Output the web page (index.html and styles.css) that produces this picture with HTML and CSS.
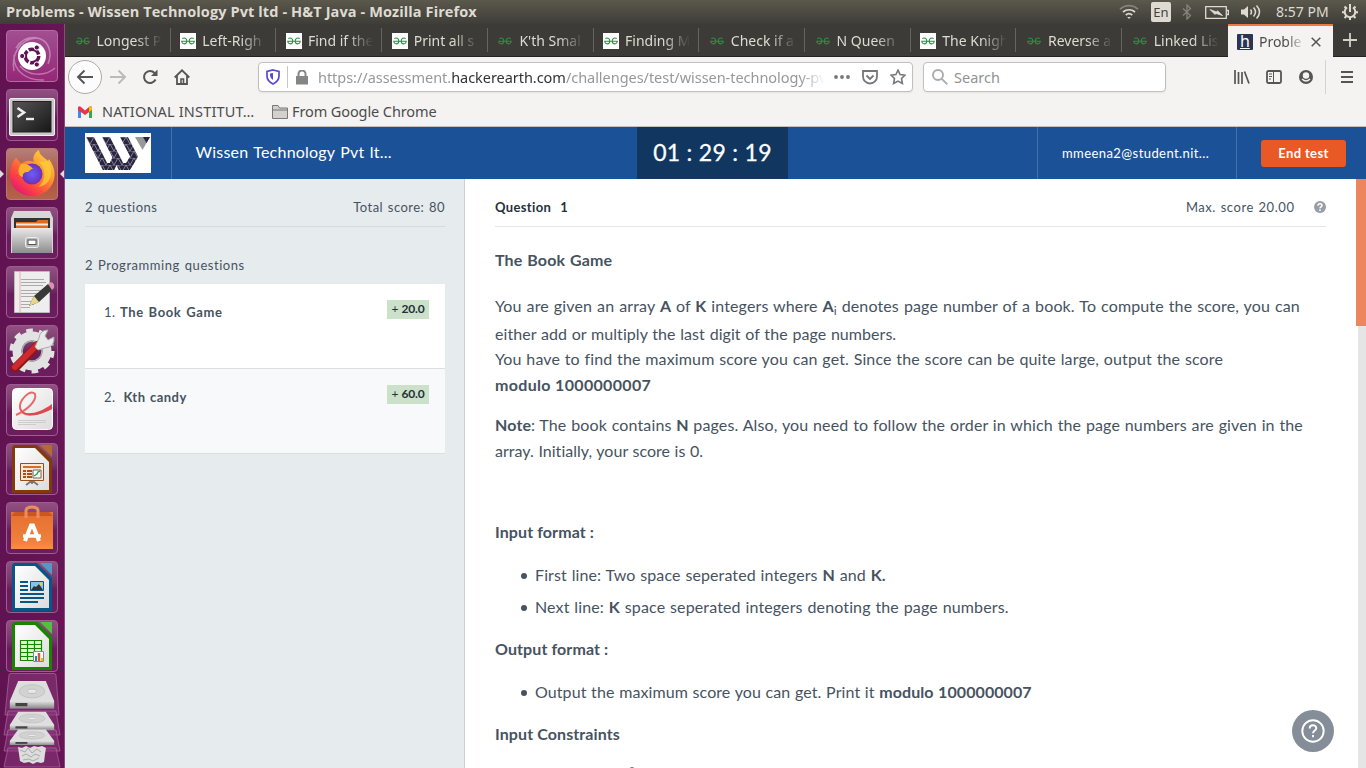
FILE: index.html
```html
<!DOCTYPE html>
<html lang="en">
<head>
<meta charset="utf-8">
<title>Problems - Wissen Technology Pvt ltd - H&amp;T Java</title>
<link rel="stylesheet" href="styles.css">
</head>
<body>
<svg class="defs" width="0" height="0">
  <defs>
    <linearGradient id="paper" x1="0" y1="0" x2="1" y2="1"><stop offset="0" stop-color="#fff"/><stop offset="1" stop-color="#dcdcdc"/></linearGradient>
    <linearGradient id="steel" x1="0" y1="0" x2="0" y2="1"><stop offset="0" stop-color="#e8e8e8"/><stop offset="1" stop-color="#8d8d8d"/></linearGradient>
    <linearGradient id="screen" x1="0" y1="0" x2="1" y2="1"><stop offset="0" stop-color="#555"/><stop offset="1" stop-color="#171717"/></linearGradient>
    <linearGradient id="fire" x1="1" y1="0" x2="0.2" y2="1"><stop offset="0" stop-color="#ffe84d"/><stop offset="0.4" stop-color="#ff9a2c"/><stop offset="0.75" stop-color="#ff4242"/><stop offset="1" stop-color="#e0127c"/></linearGradient>
    <radialGradient id="globe"><stop offset="0" stop-color="#6a5cff"/><stop offset="1" stop-color="#6b32b5"/></radialGradient>
    <linearGradient id="bag" x1="0" y1="0" x2="0" y2="1"><stop offset="0" stop-color="#e5702f"/><stop offset="0.8" stop-color="#f0803c"/><stop offset="1" stop-color="#f98e4c"/></linearGradient>
    <pattern id="tri" width="8" height="7" patternUnits="userSpaceOnUse" patternTransform="translate(1 4)"><path d="M0 0H8V7H0Z" fill="#292541"/><path d="M0 0H8M0 0 4 7 8 0" fill="none" stroke="#a9a6b5" stroke-width=".7"/></pattern>
    <clipPath id="band"><path d="M0 4H66V37H0Z"/></clipPath>
    <symbol id="gfg" viewBox="0 0 16 16"><g fill="none" stroke="currentColor" stroke-width="1.100"><path d="M1.200 8.200H14.800M2.300 5.500C4 4.600 6.800 5 6.800 8c0 3.800-5 3.800-5 .2M13.700 5.500C12 4.600 9.200 5 9.200 8c0 3.800 5 3.800 5 .2"/></g></symbol>
    <symbol id="disk" viewBox="0 0 50 32" preserveAspectRatio="none"><path d="M10 1H40L49 22V30H1V22Z" fill="#dedede"/><path d="M1 22H49V30H1Z" fill="url(#steel)"/><path d="M7 24.500H20V28H7Z" fill="#444"/><ellipse cx="25" cy="12" rx="14" ry="7" fill="#d2d2d2" stroke="#c1c1c1"/><ellipse cx="25" cy="12" rx="5" ry="2.300" fill="#e9e9e9" stroke="#bbb"/></symbol>
  </defs>
</svg>
<div class="panel">
  <div class="panel-title">Problems - Wissen Technology Pvt ltd - H&amp;T Java - Mozilla Firefox</div>
  <div class="tray">
    <svg width="20" height="16" viewBox="0 0 20 16" fill="none" stroke="#dfdbd2" stroke-width="1.700"><path d="M1 5.200C6 .4 14 .4 19 5.200" stroke="#87847b"/><path d="M4 8c3.500-3 8.500-3 12 0M6.800 11c2-1.700 4.400-1.700 6.400 0"/><path d="M8.200 13h3.600L10 15Z" fill="#dfdbd2" stroke="none"/></svg>
    <span class="lang">En</span>
    <svg class="bt" width="10" height="16" viewBox="0 0 10 16" fill="none" stroke="#87847b" stroke-width="1.300"><path d="M1 4.500 8.500 11.500 5 15V1L8.500 4.500 1 11.500"/></svg>
    <svg class="bat" width="24" height="13" viewBox="0 0 24 13"><path d="M.7.7H21.300V12.300H.7ZM22 4.500h1.400v4H22" fill="none" stroke="#dfdbd2" stroke-width="1.300"/><path d="M5 3.500 11.500 6 12.500 4.800 17.500 9.500 11 7.500 10 8.500Z" fill="#dfdbd2" stroke="#dfdbd2" stroke-width=".8"/></svg>
    <svg class="vol" width="21" height="16" viewBox="0 0 21 16"><path d="M1 5.500H4L8 2V14L4 10.500H1Z" fill="#dfdbd2"/><path d="M10.500 5.500q2 2.500 0 5M13.500 3.500q4 4.500 0 9M16.500 1.500q6 6.500 0 13" fill="none" stroke="#dfdbd2" stroke-width="1.500"/></svg>
    <span class="clock">8:57 PM</span>
    <svg width="16" height="16" viewBox="0 0 16 16" fill="none" stroke="#dfdbd2"><path d="M5 3.500A5.300 5.300 0 1 0 11 3.500" stroke-width="2"/><path d="M8 0V8" stroke-width="2"/><path d="M2.500 2.500 4.500 4.500M13.500 2.500l-2 2M0 8.200H3M13 8.200H16M2.500 14l2-2M13.500 14l-2-2M8 13v3" stroke-width="2"/></svg>
  </div>
</div>
<div class="desktop">
  <nav class="dock">
    <div class="tile dash"><svg viewBox="0 0 52 52"><g fill="none" stroke="#fff" opacity=".35" stroke-width="1.500"><path d="M8 41C5 24 14 9 30 8c12 1 17 14 12 26M10 18C18 4 38 4 43 18M38 50C22 51 7 42 8 25M49 38C39 47 22 46 14 36"/></g><circle cx="26" cy="26" r="14" fill="#fff"/><circle cx="26" cy="26" r="6.800" fill="none" stroke="#5d1653" stroke-width="3.500" stroke-dasharray="12.500 1.700"/><g fill="#5d1653" stroke="#fff"><circle cx="16.200" cy="26" r="2.600"/><circle cx="30.800" cy="17.500" r="2.600"/><circle cx="30.800" cy="34.500" r="2.600"/></g></svg></div>
    <div class="tile"><svg viewBox="0 0 52 52"><rect x="3.500" y="9.500" width="45" height="37" rx="1.500" fill="#c9c9c9" stroke="#eee"/><rect x="7" y="12.500" width="38" height="30.500" fill="url(#screen)" stroke="#222"/><path d="M11.500 19 18 23.500 11.500 28" fill="none" stroke="#eee" stroke-width="2.600"/><path d="M20 30h8" stroke="#eee" stroke-width="2.400"/></svg></div>
    <div class="tile fox"><svg viewBox="0 0 52 52"><path d="M5 20C6 14 8 12 10 9.500L15 16C20 11 26 13 28 14 26 9 29 4 33 2c0 5 6 8 9 11l1-2c4 6 6 11 5.500 17C48 39 38 48 26 48S4 39 4 28c0-3 0-5 1-8Z" fill="url(#fire)"/><circle cx="26" cy="26" r="10.500" fill="url(#globe)"/><path d="M15 16c5-1 9 1 12 5-3 0-3 2-5 3-3 0-6 1-5 5-5-1-6-7-2-13Z" fill="#ffb02d"/><path d="M32 14c8 4 9 19 0 25 14-2 16-16 10-26" fill="#ffce3a" opacity=".75"/></svg><i class="pip left"></i><i class="pip right"></i></div>
    <div class="tile"><svg viewBox="0 0 52 52"><path d="M8 4H44L47 11V46H5V11Z" fill="#d7d7d7"/><path d="M8 11H44V24H8Z" fill="#333"/><path d="M10 15H30l2-2H42V24H10Z" fill="#df6b20"/><path d="M10 16.500H42V18.500H10Z" fill="#f3eadc"/><path d="M6 21H46V46H6Z" fill="url(#steel)"/><rect x="19.500" y="30.500" width="13" height="10" rx="2" fill="#bcbcbc" stroke="#eee"/><rect x="22" y="33" width="8" height="4.500" fill="#fff" stroke="#555"/></svg></div>
    <div class="tile"><svg viewBox="0 0 52 52"><path d="M8.500 5.500H43.500V46.500H8.500Z" fill="#eee" stroke="#bbb"/><path d="M14 6V46" stroke="#eaa"/><path d="M15 13.500H38M15 16.500H40M15 19.500H37M15 24.500H40M15 27.500H34M15 30.500H39M15 35.500H31M15 38.500H28M15 41.500H24" stroke="#aaa"/><path d="M23 40 28 30 42 18 47 23 33 36Z" fill="#383838"/><path d="M23 40 28 30 33 36Z" fill="#e6d88b"/><path d="M42 18 45 16q4 1 3 6l-2 2Z" fill="#df8fb3"/></svg></div>
    <div class="tile"><svg viewBox="0 0 52 52"><circle cx="26" cy="26" r="15" fill="none" stroke="#e2e2e2" stroke-width="9"/><circle cx="26" cy="26" r="20" fill="none" stroke="#e2e2e2" stroke-width="5" stroke-dasharray="6.500 6.070"/><circle cx="26" cy="26" r="10" fill="none" stroke="#aaa" stroke-width="1.500"/><path d="M9 43 32 20" stroke="#8f1518" stroke-width="8.500" stroke-linecap="round"/><path d="M9 42 31 20" stroke="#ce2a2d" stroke-width="6" stroke-linecap="round"/><path d="M29 22 33 13q1-8 9-8l-3 6 3 4 6-3q1 10-9 11L32 25Z" fill="#e8e8e8" stroke="#aaa"/></svg></div>
    <div class="tile"><svg viewBox="0 0 52 52"><rect x="6.500" y="4.500" width="40" height="41" rx="4" fill="url(#paper)" stroke="#fff"/><path d="M10 31C21 26 31 17 29 10 24 5 13 16 14 24c2 9 16 9 32-1" fill="none" stroke="#e66b6d" stroke-width="2"/><path d="M14 24c3 8 17 7 32-4v5C30 34 15 33 14 24Z" fill="#dc4a4d"/><path d="M12 36.500H40M12 38.500H40M12 40.500H30" stroke="#ccc"/></svg></div>
    <div class="tile"><svg viewBox="0 0 52 52"><path d="M8 2H31L46 17V50H6V4Z" fill="#813b0b"/><path d="M34 2H46V14Z" fill="#b56a30"/><path d="M9 5H29L43 19V47H9Z" fill="url(#paper)"/><path d="M14.500 20.500H37.500V37.500H14.500Z" fill="#fbe8d8" stroke="#9c4b16"/><path d="M17 24H35" stroke="#d46e2c" stroke-width="2"/><path d="M17 28h3m1 0h5M17 31h3m1 0h5M17 34h3m1 0h5" stroke="#ad5017" stroke-width="2"/><path d="M27 27H35V35H27Z" fill="#fff" stroke="#666"/><path d="m28 33 3-2 1-2 2-1" fill="none" stroke="#35a53a" stroke-width="1.500"/><path d="M26 38v3m-6 1 4-3h4l4 3" fill="none" stroke="#777" stroke-width="1.800"/></svg></div>
    <div class="tile"><svg viewBox="0 0 52 52"><path d="M5 10H47V47H5Z" fill="url(#bag)"/><path d="M5 14 9 10H43L47 14Z" fill="#ca5721"/><path d="M20 16V9q0-4 6-4t6 4v7" fill="none" stroke="#ed8c5c" stroke-width="3"/><path d="M19 39 25 23.500H27L33 39" fill="none" stroke="#fff" stroke-width="4"/><path d="M17 34H35" stroke="#fff" stroke-width="3.500"/></svg></div>
    <div class="tile"><svg viewBox="0 0 52 52"><path d="M8 2H31L46 17V50H6V4Z" fill="#075686"/><path d="M34 2H46V14Z" fill="#4c9bc8"/><path d="M9 5H29L43 19V47H9Z" fill="url(#paper)"/><path d="M14 21h8m-8 4h8m-8 4h8M14 33H38M14 37H38M14 41H32" stroke="#075686" stroke-width="2"/><path d="M24.500 20.500H37.500V29.500H24.500Z" fill="#80c5ea" stroke="#075686"/><path d="m25 29 3-4 2 1 3-3 4 6Z" fill="#333"/><circle cx="35" cy="23" r="1.500" fill="#f3d034"/></svg></div>
    <div class="tile"><svg viewBox="0 0 52 52"><path d="M8 2H31L46 17V50H6V4Z" fill="#188500"/><path d="M34 2H46V14Z" fill="#54c13d"/><path d="M9 5H29L43 19V47H9Z" fill="url(#paper)"/><path d="M14.500 20.500H35.500V40.500H14.500ZM14 24.500H36M14 28.500H36M14 32.500H36M14 36.500H36M21.500 20V41M28.500 20V41" fill="#d9f6cd" stroke="#188500" stroke-width="1.200"/><path d="M27.500 31.500H37.500V41.500H27.500Z" fill="#fff" stroke="#888"/><path d="M30 41v-5" stroke="#1988c7" stroke-width="2"/><path d="M33 41V33" stroke="#d76020" stroke-width="2.500"/><path d="M36 41v-3" stroke="#e8b72c" stroke-width="2"/></svg></div>
    <svg class="stack" viewBox="0 0 60 96"><g fill="#8d3b80" fill-opacity=".5" stroke="#aa6b9e" stroke-opacity=".7"><path d="M7 2Q7 .5 9 .5H52q2 0 2 2L57 42H3Z"/><path d="M6 38H54L58 62H2Z"/><path d="M6 57H54L58 78H2Z"/><path d="M6 75H54L58 94H2Z"/></g><use href="#disk" x="7" y="7" width="46" height="30"/><use href="#disk" x="7" y="38" width="46" height="20"/><use href="#disk" x="7" y="56" width="46" height="17"/><path d="m16 74 4 1 4-2 4 2 4-2 4 1 4-1 4 2-1 6-1 8-3 1-4-1-4 2-4-2-5 1-4-2-1-7Z" fill="#ddd"/><path d="m18 77 5 2 3-4 4 5 5-4 4 3M20 83l4-2 5 3 4-3 5 2M21 87l6-1 4 2 6-3" fill="none" stroke="#aaa"/></svg>
  </nav>
  <main class="window">
    <div class="tabs">
      <div class="tab"><svg class="fav"><use href="#gfg"/></svg><span>Longest P</span></div>
      <div class="tab"><svg class="fav white"><use href="#gfg"/></svg><span>Left-Righ</span></div>
      <div class="tab"><svg class="fav white"><use href="#gfg"/></svg><span>Find if the</span></div>
      <div class="tab"><svg class="fav white"><use href="#gfg"/></svg><span>Print all s</span></div>
      <div class="tab"><svg class="fav"><use href="#gfg"/></svg><span>K'th Smal</span></div>
      <div class="tab"><svg class="fav white"><use href="#gfg"/></svg><span>Finding M</span></div>
      <div class="tab"><svg class="fav"><use href="#gfg"/></svg><span>Check if a</span></div>
      <div class="tab"><svg class="fav"><use href="#gfg"/></svg><span>N Queen</span></div>
      <div class="tab"><svg class="fav white"><use href="#gfg"/></svg><span>The Knigh</span></div>
      <div class="tab"><svg class="fav"><use href="#gfg"/></svg><span>Reverse a</span></div>
      <div class="tab last"><svg class="fav"><use href="#gfg"/></svg><span>Linked Lis</span></div>
      <div class="tab active"><b class="he">h</b><span>Proble</span><svg class="close" viewBox="0 0 10 10"><path d="m.7.7 8.600 8.600M9.300.7.7 9.300" stroke="#555" stroke-width="1.500"/></svg></div>
      <div class="plus"><svg width="14" height="14" viewBox="0 0 14 14"><path d="M7 0V14M0 7H14" stroke="#d5d2ca" stroke-width="1.800"/></svg></div>
    </div>
    <div class="nav">
      <div class="back"><svg width="18" height="16" viewBox="0 0 18 16" fill="none" stroke="#555" stroke-width="1.900"><path d="M17 8H2M8.500 1.500 2 8l6.500 6.500"/></svg></div>
      <svg class="fwd" width="18" height="16" viewBox="0 0 18 16" fill="none" stroke="#bababa" stroke-width="1.900"><path d="M1 8H16M9.500 1.500 16 8l-6.500 6.500"/></svg>
      <svg class="reload" width="16" height="16" viewBox="0 0 16 16"><path d="M13.500 10.500A6 6 0 1 1 12.500 4" fill="none" stroke="#555" stroke-width="2"/><path d="M15.500.5V7H9Z" fill="#555"/></svg>
      <svg class="home" width="16" height="16" viewBox="0 0 16 16" fill="none" stroke="#555" stroke-width="1.800"><path d="M.7 8.500 8 1.300 15.300 8.500M3 7v8H13V7"/><path d="M7 15V10H9.500V15" stroke-width="1.600"/></svg>
      <div class="url">
        <svg width="14" height="16" viewBox="0 0 14 16"><path d="M7 1 13 2.500V7q0 5-6 8Q1 12 1 7V2.500Z" fill="#fff" stroke="#5848d4" stroke-width="1.700"/><path d="M7 4v7q-3-2-3-4.500V4.500Z" fill="#5848d4"/></svg>
        <i class="bar"></i>
        <svg class="lock" width="12" height="15" viewBox="0 0 12 15"><path d="M0 6H12V14.500H0Z" fill="#858585"/><path d="M2.500 7V4a3.500 3.500 0 0 1 7 0V7" fill="none" stroke="#858585" stroke-width="2"/></svg>
        <span class="addr">https://assessment.<b>hackerearth.com</b>/challenges/test/wissen-technology-pv</span>
        <svg width="16" height="4" viewBox="0 0 16 4" fill="#777"><circle cx="2" cy="2" r="1.900"/><circle cx="8" cy="2" r="1.900"/><circle cx="14" cy="2" r="1.900"/></svg>
        <svg class="pocket" width="16" height="15" viewBox="0 0 16 15" fill="none" stroke="#777" stroke-width="1.800"><path d="M1 1H15V6.500a7 7 0 0 1-14 0Z"/><path d="m4.500 5.500 3.500 3.500 3.500-3.500"/></svg>
        <svg width="16" height="16" viewBox="0 0 16 16" fill="none" stroke="#777" stroke-width="1.600"><path d="M8 1.200 10.100 5.500 15 6.100 11.500 9.500 12.400 14.500 8 12.100 3.600 14.500 4.500 9.500 1 6.100 5.900 5.500Z"/></svg>
      </div>
      <div class="search"><svg width="16" height="16" viewBox="0 0 16 16" fill="none" stroke="#aaa" stroke-width="1.900"><circle cx="6" cy="6" r="5"/><path d="m9.800 9.800 5.500 5.500"/></svg><span>Search</span></div>
      <div class="tools">
        <svg width="16" height="14" viewBox="0 0 16 14" stroke="#555" stroke-width="1.700"><path d="M1 0V14M4.500 2V14M8 2V14M10.500 1.500 15 13.500"/></svg>
        <svg width="16" height="14" viewBox="0 0 16 14" fill="none" stroke="#555"><rect x="1" y="1" width="14" height="12" rx="1.500" stroke-width="1.800"/><path d="M7.500 1V13M3 4H6M3 6.500H6M3 9H5"/></svg>
        <svg width="14" height="14" viewBox="0 0 14 14"><circle cx="7" cy="7" r="7" fill="#555"/><circle cx="7" cy="5.500" r="3.200" fill="#f4f3f2"/><path d="M3 9q4 4 8 0" fill="none" stroke="#f4f3f2" stroke-width="1.300"/></svg>
      </div>
      <div class="menu"><svg width="12" height="12" viewBox="0 0 12 12" stroke="#555" stroke-width="1.900"><path d="M0 1H12M0 6H12M0 11H12"/></svg></div>
    </div>
    <div class="bookmarks">
      <svg width="16" height="12" viewBox="0 0 16 12"><path d="M1 1H4V12H1Z" fill="#4285f4"/><path d="M12 1H15V12H12Z" fill="#34a853"/><path d="M1 1.500Q2-.5 4 1L8 4.500 12 1q2-1.500 3 .5V4L8 9 1 4Z" fill="#ea334b"/><path d="M12 1q3-2 3 1V4L12 6Z" fill="#fbbc04"/></svg>
      <span class="bm1">NATIONAL INSTITUT…</span>
      <svg class="folder" width="16" height="14" viewBox="0 0 16 14"><path d="M.5 13.500V.5H6L7.500 3H15.500V13.500ZM.5 5H15.500" fill="#d3d1ce" stroke="#777"/></svg>
      <span class="bm2">From Google Chrome</span>
    </div>
    <header class="site">
      <div class="brand"><svg width="66" height="40" viewBox="0 0 66 40"><path d="M0 0H66V40H0Z" fill="#fff"/><g clip-path="url(#band)" fill="none" stroke="url(#tri)" stroke-width="7"><path d="M3 0 20 33.500H27L31 25"/><path d="M19 0 36 33.500H43L49 23.500 37 0"/></g><path d="M50 4H65L57.500 17Z" fill="#999"/><path d="M58 4H65L61.500 10Z" fill="#292541"/></svg></div>
      <div class="company">Wissen Technology Pvt lt...</div>
      <div class="timer">01 : 29 : 19</div>
      <div class="user">mmeena2@student.nit...</div>
      <div class="end"><button>End test</button></div>
    </header>
    <div class="content">
      <aside class="list">
        <div class="sum"><span class="q2">2 questions</span><span class="total">Total score: 80</span></div>
        <div class="group">2 Programming questions</div>
        <div class="card"><span class="num">1.</span><b class="c1">The Book Game</b><span class="pts">+ <b>20.0</b></span></div>
        <div class="card second"><span class="num">2.</span><b class="c2">Kth candy</b><span class="pts">+ <b>60.0</b></span></div>
      </aside>
      <article class="question">
        <div class="qhead"><b>Question&nbsp; 1</b><span class="max">Max. score 20.00</span><svg width="12" height="12" viewBox="0 0 12 12"><circle cx="6" cy="6" r="6" fill="#989ea5"/><path d="M4 4.700C4 2 8 2 8 4.400 8 5.800 6 5.800 6 7.300M6 8.300V10" stroke="#fff" stroke-width="1.500" fill="none"/></svg></div>
        <h3 class="title">The Book Game</h3>
        <p class="p1"><span class="l1">You are given an array <b>A</b> of <b>K</b> integers where <b>A</b><small>i</small> denotes page number of a book. To compute the score, you can</span><span class="l2">either add or multiply the last digit of the page numbers.</span><span class="l3">You have to find the maximum score you can get. Since the score can be quite large, output the score</span><span class="l4"><b>modulo 1000000007</b></span></p>
        <p class="p2"><span class="l5"><b>Note</b>: The book contains <b>N</b> pages. Also, you need to follow the order in which the page numbers are given in the</span><span class="l6">array. Initially, your score is 0.</span></p>
        <h3 class="in">Input format :</h3>
        <ul><li class="i1">First line: Two space seperated integers <b>N</b> and <b>K.</b></li><li class="i2">Next line: <b>K</b> space seperated integers denoting the page numbers.</li></ul>
        <h3 class="out">Output format :</h3>
        <ul><li class="i3">Output the maximum score you can get. Print it <b>modulo 1000000007</b></li></ul>
        <h3 class="cons">Input Constraints</h3>
        <div class="power">8</div>
      </article>
      <div class="track"><i class="thumb"></i></div>
      <div class="help"><svg width="24" height="24" viewBox="0 0 24 24" fill="none" stroke="#fff" stroke-width="1.900"><circle cx="12" cy="12" r="10.700"/><path d="M8.700 9.500C8.700 5.200 15.300 5.400 15.300 9.200 15.300 11.500 12 11.600 12 14.200M12 16V18.200"/></svg></div>
    </div>
  </main>
</div>
</body>
</html>
```

FILE: styles.css
```css
* { box-sizing: border-box; }
body { margin: 0; width: 1366px; height: 768px; overflow: hidden; font-family: "Noto Sans", "Open Sans", sans-serif; }
svg { display: block; flex: none; }
.defs { position: absolute; }
.panel { height: 24px; display: flex; justify-content: space-between; padding: 0 8px 0 6px; background: linear-gradient(#5b584c, #3e3d38); color: #dfdbd2; }
.panel-title { font: bold 14.500px/24px "Open Sans", sans-serif; white-space: nowrap; letter-spacing: .11px; }
.tray { display: flex; align-items: center; }
.lang { width: 20px; height: 20px; margin-left: 12px; border-radius: 2px; background: #dfdbd2; color: #45433e; font-size: 13px; line-height: 20px; text-align: center; }
.bt { margin-left: 11px; }
.bat { margin-left: 13px; }
.vol { margin-left: 11px; }
.clock { width: 53px; margin: 0 13px 0 15px; font-size: 14px; line-height: 20px; padding-bottom: 1px; white-space: nowrap; }
.desktop { display: flex; height: 744px; }
.dock { width: 65px; padding: 6px 0 0 6px; background: linear-gradient(90deg, #601251, #671555); border-right: 1px solid #8b4a7c; }
.tile { position: relative; width: 52px; height: 52px; margin-bottom: 7px; border-radius: 4px; border: 1px solid #9d5c92; background: linear-gradient(#915080, #74366a 40%, #681c5b 55%, #6c1d5e); }
.tile svg { width: 52px; height: 52px; margin: -1px; }
.dash { background: linear-gradient(#a24f91, #962778); border-color: #b569a5; }
.fox { background: linear-gradient(#b48079, #aa5345 55%, #b5634a); border-color: #bd7770; }
.pip { position: absolute; top: 21px; border: 4px solid transparent; }
.left { left: -7px; border-left-color: #ddd; border-right: 0; }
.right { right: -7px; border-right-color: #ddd; border-left: 0; }
.stack { width: 60px; height: 96px; margin: -6px 0 0 -4px; }
.window { width: 1301px; display: flex; flex-direction: column; }
.tabs { display: flex; height: 33px; background: #3c3b37; border-bottom: 1px solid #242320; font-size: 14px; color: #dfdbd2; }
.tab { position: relative; width: 105.730px; padding: 1px 9px 0 9.500px; display: flex; align-items: center; background: linear-gradient(#66645e, #66645e) right center / 1px 24px no-repeat; }
.last { background: none; }
.tab span { width: 65px; margin-left: 6px; overflow: hidden; white-space: nowrap; mask-image: linear-gradient(90deg, #000 60%, transparent); }
.fav { width: 16px; height: 16px; color: #2f8d46; }
.white { background: #fff; }
.tabs .active { height: 33px; width: 105px; background: #f4f3f2; border-top: 2px solid #f07746; color: #4c4c4c; padding: 0 11px 0 9px; }
.tabs .active span { width: 46px; margin-left: 6px; }
.he { width: 16px; height: 16px; border-radius: 1px; background: #2c3454; color: #fff; font: 16px/15px "Noto Sans", sans-serif; text-align: center; text-decoration: underline; }
.close { width: 10px; height: 10px; margin-left: 6px; }
.plus { margin: 9px 0 0 10px; }
.nav { height: 41px; background: #f4f3f2; display: flex; align-items: center; padding: 0 13px 1px 3px; }
.back { width: 34px; height: 34px; border: 1px solid #aaa; border-radius: 50%; background: #fcfcfc; display: grid; place-items: center; }
.fwd { margin-left: 7px; }
.reload { margin-left: 15px; }
.home { margin-left: 16px; }
.url, .search { height: 30px; border: 1px solid #c2c0bd; border-radius: 4px; background: #fff; display: flex; align-items: center; box-shadow: 0 1px 2px #0001; font-size: 14.500px; }
.url { width: 655px; margin-left: 68px; padding: 0 6px 0 7px; color: #989898; }
.bar { width: 1px; height: 22px; margin: 0 8px 0 7px; background: #c7c7c7; }
.addr { width: 507px; margin: 0 9px 0 10px; overflow: hidden; white-space: nowrap; line-height: 20px; letter-spacing: -.04px; mask-image: linear-gradient(90deg, #000 95%, transparent); }
.addr b { color: #333; font-weight: 400; }
.pocket { margin: 0 12px; }
.search { width: 243px; margin-left: 10px; padding-left: 8px; color: #929292; }
.search span { margin-left: 6px; }
.tools { display: flex; align-items: center; gap: 16px; margin-left: 68px; }
.tools svg:last-child { margin-left: 1px; }
.menu { height: 34px; margin-left: auto; padding-left: 15px; border-left: 1px solid #d5d3d0; display: flex; align-items: center; }
.bookmarks { height: 29px; display: flex; align-items: center; padding: 0 0 1px 12px; background: #f4f3f2; border-bottom: 1px solid #c2c0bd; color: #4c4c4c; font-size: 14.500px; white-space: nowrap; }
.bm1 { width: 153px; margin-left: 9px; letter-spacing: .17px; }
.bm1, .bm2 { line-height: 18px; padding-bottom: 1px; }
.folder { margin-left: 17px; }
.bm2 { margin-left: 4px; letter-spacing: -.1px; }
.site { height: 52px; display: flex; background: #1b5297; color: #fff; font-family: Lato, sans-serif; white-space: nowrap; }
.brand { width: 107px; padding: 6px 20px; border-right: 1px solid #4272aa; }
.company { width: 465px; padding-left: 23.500px; font-size: 16px; line-height: 50px; letter-spacing: .22px; word-spacing: 1px; }
.timer { width: 151px; background: #11365f; text-align: center; font-size: 23px; line-height: 51px; letter-spacing: .3px; -webkit-text-stroke: .3px #fff; }
.user { width: 199px; margin-left: auto; padding-left: 24px; border-left: 1px solid #4272aa; font-size: 13px; line-height: 53px; letter-spacing: .42px; }
.end { width: 130px; padding: 13px 20px 0 24px; border-left: 1px solid #4272aa; }
.end button { width: 85px; height: 27px; padding: 0; border: 0; border-radius: 3px; background: #e95925; color: #fff; font: bold 13px/27px Lato, sans-serif; letter-spacing: .35px; }
.content { position: relative; height: 589px; display: flex; font-family: Lato, sans-serif; color: #46535f; overflow: hidden; }
.list { width: 400px; padding: 0 19px 0 20px; background: #e6ebee; border-right: 1px solid #ccd1d5; font-size: 13px; letter-spacing: .5px; word-spacing: 1px; }
.sum { height: 48px; display: flex; justify-content: space-between; border-bottom: 1px solid #d5dade; line-height: 57px; }
.total { letter-spacing: .45px; }
.group { height: 57px; padding-top: 28px; line-height: 20px; letter-spacing: .55px; }
.card { height: 85px; display: flex; padding: 16px 16px 0 19px; background: #fff; border-bottom: 1px solid #dce0e3; }
.card .num { width: 16px; line-height: 25px; }
.card b { letter-spacing: .62px; line-height: 25px; }
.card .c2 { letter-spacing: .46px; }
.second { background: #f8f9fb; }
.second .num { width: 19.500px; }
.card .pts { width: 42px; height: 19px; margin-left: auto; background: #cce1c9; color: #253039; font-size: 12px; line-height: 18px; text-align: center; letter-spacing: 0; word-spacing: 0; }
.card .pts b { line-height: 18px; letter-spacing: -.15px; }
.question { width: 893px; padding: 0 32px 0 30px; font-size: 16px; line-height: 26px; background: #fff; white-space: nowrap; }
.qhead { height: 48px; display: flex; align-items: center; border-bottom: 1px solid #e3e5e7; padding-top: 9px; font-size: 13px; letter-spacing: .35px; }
.qhead b { color: #253039; word-spacing: 1px; }
.max { margin: 0 19.500px 0 auto; letter-spacing: .55px; word-spacing: .8px; }
h3 { margin: 0; font-size: 16px; }
.title { margin-top: 20px; letter-spacing: .15px; word-spacing: .7px; }
p { margin: 0; }
p span { display: block; }
.p1 { margin-top: 20px; }
.p2 { margin-top: 14px; }
small { font-size: 12px; position: relative; top: 3px; }
.l1 { height: 28px; letter-spacing: .13px; word-spacing: .75px; }
.l2 { line-height: 25px; letter-spacing: .05px; word-spacing: .6px; }
.l3 { letter-spacing: .14px; word-spacing: .45px; }
.l4 { letter-spacing: .33px; }
.l5 { letter-spacing: .14px; word-spacing: .5px; }
.l6 { letter-spacing: .03px; word-spacing: .4px; }
.l1 b, .l5 b { margin-right: -.2px; }
.in { margin-top: 55px; }
ul { list-style: none; margin: 17px 0 16px; padding: 0; }
li { display: flex; align-items: center; white-space: pre; letter-spacing: .13px; word-spacing: .6px; margin-bottom: 6px; }
li::before { content: ""; width: 6px; height: 6px; margin: 1px 8px 0 26px; border-radius: 50%; background: #46535f; }
li:last-child { margin-bottom: 0; }
.i1 { letter-spacing: .11px; }
.i3 { letter-spacing: .08px; word-spacing: .5px; }
.in, .out, .cons { letter-spacing: .1px; }
.power { margin: 13px 0 0 134px; font-size: 10px; line-height: 20px; }
.track { width: 8px; background: #e5e5e5; }
.thumb { position: absolute; right: 0; top: 0; width: 10px; height: 147px; background: #ee865d; }
.help { position: absolute; right: 32px; top: 531px; width: 42px; height: 42px; border-radius: 50%; background: #858e98; display: grid; place-items: center; }
```
